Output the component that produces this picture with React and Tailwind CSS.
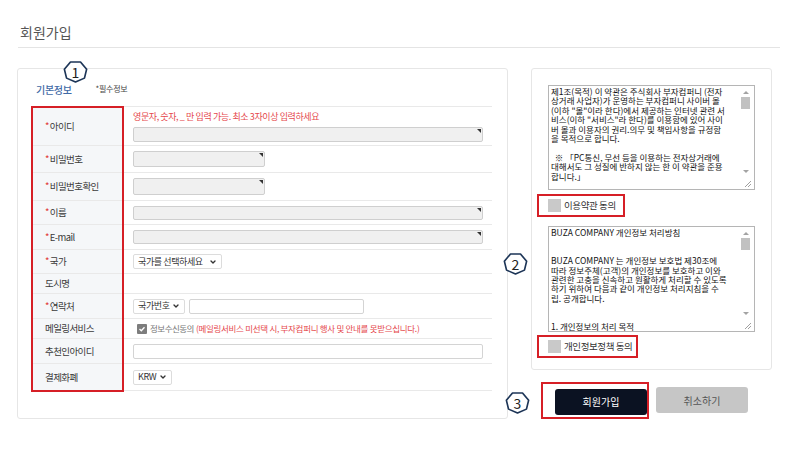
import { ChevronDown } from 'lucide-react'

// ── Numbered heptagon marker ─────────────────────────────────────
function Marker({ n, className }) {
  return (
    <div className={`absolute w-[25px] h-[23px] flex items-center justify-center ${className}`}>
      <svg width="25" height="23" viewBox="0 0 24 24" className="absolute inset-0" preserveAspectRatio="none">
        <polygon
          points="12,23 3.4,18.9 1.3,9.6 7.2,2.1 16.8,2.1 22.7,9.6 20.6,18.9"
          fill="white"
          stroke="#1d3557"
          strokeWidth="1.6"
          strokeLinejoin="round"
        />
      </svg>
      <span className="relative text-[14px] leading-none text-[#222] pt-[1px]">{n}</span>
    </div>
  )
}

// ── Form pieces ──────────────────────────────────────────────────
function Input({ w, h = 'h-[15px]', filled = true }) {
  return (
    <div className={`relative rounded-[2px] border ${w} ${h} ${filled ? 'bg-[#f0f0f0] border-[#cfcfcf]' : 'bg-white border-[#d4d4d4]'}`}>
      {filled && (
        <span className="absolute top-[1px] right-[1px] w-0 h-0 border-l-[4px] border-l-transparent border-t-[4px] border-t-[#333]" />
      )}
    </div>
  )
}

function Select({ text, w }) {
  return (
    <div className={`h-[15px] ${w} bg-white border border-[#dcdcdc] rounded-[2px] flex items-center justify-between pl-[4px] pr-[4px] text-[9px] tracking-[-0.4px] text-[#333]`}>
      <span>{text}</span>
      <ChevronDown size={8} strokeWidth={4} className="text-[#333]" />
    </div>
  )
}

function Row({ h, label, req, children }) {
  return (
    <div className={`flex border-b border-[#e9e9e9] ${h}`}>
      <div className="w-[89px] bg-[#f5f7f9] flex items-center pl-[12px] text-[9.5px] tracking-[-0.6px] text-[#3a3a3a]">
        {req && <span className="text-[#e0342f] mr-[1px]">*</span>}
        {label}
      </div>
      <div className="flex-1 pl-[11px] flex items-center">{children}</div>
    </div>
  )
}

// ── Fake textarea with scrollbar ────────────────────────────────
function TextBox({ lines, h }) {
  return (
    <div className={`ml-[16px] w-[207px] ${h} border border-[#b5b5b5] flex bg-white`}>
      <div className="flex-1 overflow-hidden pl-[2px] pt-[1px] text-[8.5px] leading-[9.4px] text-[#111] whitespace-pre">
        {lines.map((l, i) => (
          <div key={i} className="h-[9.4px]">{l}</div>
        ))}
      </div>
      <div className="w-[17px] flex flex-col items-center">
        <span className="mt-[5px] w-0 h-0 border-l-[3px] border-r-[3px] border-b-[3px] border-l-transparent border-r-transparent border-b-[#a3a3a3]" />
        <div className="mt-[3px] w-[9px] h-[12px] bg-[#c1c1c1]" />
        <div className="flex-1" />
        <span className="mb-[4px] w-0 h-0 border-l-[3px] border-r-[3px] border-t-[3px] border-l-transparent border-r-transparent border-t-[#a3a3a3]" />
        <svg width="17" height="12" viewBox="0 0 17 12">
          <path d="M14 4 L8 10 M14 7 L11 10" stroke="#a0a0a0" strokeWidth="1" />
        </svg>
      </div>
    </div>
  )
}

function Agree({ label, w }) {
  return (
    <div className={`ml-[5px] h-[23px] ${w} border-2 border-[#d61f26] flex items-center pl-[9px] gap-[3px]`}>
      <span className="w-[13px] h-[13px] bg-[#c9c9c9]" />
      <span className="text-[9.5px] tracking-[-0.4px] text-[#333]">{label}</span>
    </div>
  )
}

const terms = [
  '제1조(목적) 이 약관은 주식회사 부자컴퍼니 (전자',
  '상거래 사업자)가 운영하는 부자컴퍼니 사이버 몰',
  '(이하 "몰"이라 한다)에서 제공하는 인터넷 관련 서',
  '비스(이하 "서비스"라 한다)를 이용함에 있어 사이',
  '버 몰과 이용자의 권리.의무 및 책임사항을 규정함',
  '을 목적으로 합니다.',
  '',
  '  ※ 「PC통신, 무선 등을 이용하는 전자상거래에',
  '대해서도 그 성질에 반하지 않는 한 이 약관을 준용',
  '합니다.」',
]

const privacy = [
  'BUZA COMPANY 개인정보 처리방침',
  '',
  '',
  'BUZA COMPANY 는 개인정보 보호법 제30조에',
  '따라 정보주체(고객)의 개인정보를 보호하고 이와',
  '관련한 고충을 신속하고 원활하게 처리할 수 있도록',
  '하기 위하여 다음과 같이 개인정보 처리지침을 수',
  '립. 공개합니다.',
  '',
  '',
  '1. 개인정보의 처리 목적',
]

export default function App() {
  return (
    <div className="relative w-[800px] h-[450px] overflow-hidden bg-white font-['Noto_Sans_CJK_KR',sans-serif]">
      {/* Title */}
      <div className="pt-[22px] px-[18px]">
        <h1 className="pl-[2px] text-[14px] leading-[20px] text-[#555]">회원가입</h1>
        <div className="mt-[5px] h-px w-[762px] bg-[#e4e4e4]" />
      </div>

      <div className="mt-[20px] pl-[17px] flex items-start">
        {/* Left: basic info */}
        <div className="w-[491px] h-[351px] border border-[#e6e6e6] rounded-[3px]">
          <div className="h-[37px] pt-[14px] pl-[18px] flex items-start">
            <span className="text-[10px] leading-[14px] tracking-[-0.3px] text-[#3f6aa6] font-medium">기본정보</span>
            <span className="ml-[24px] text-[8px] leading-[12px] tracking-[-0.3px] text-[#444]">*필수정보</span>
          </div>

          <div className="relative ml-[15px] w-[459px] border-t border-[#e9e9e9]">
            <div className="absolute -left-[2px] -top-[1px] w-[93px] h-[286px] border-2 border-[#d61f26] pointer-events-none" />

            <Row h="h-[39px]" label="아이디" req>
              <div className="flex flex-col self-start pt-[4px]">
                <span className="text-[9px] leading-[12px] tracking-[-0.4px] text-[#e5484d]">
                  영문자, 숫자, _ 만 입력 가능. 최소 3자이상 입력하세요
                </span>
                <div className="mt-[4px]"><Input w="w-[350px]" /></div>
              </div>
            </Row>
            <Row h="h-[27px]" label="비밀번호" req><Input w="w-[132px]" h="h-[16px]" /></Row>
            <Row h="h-[28px]" label="비밀번호확인" req><Input w="w-[132px]" h="h-[17px]" /></Row>
            <Row h="h-[24px]" label="이름" req><Input w="w-[350px]" h="h-[14px]" /></Row>
            <Row h="h-[25px]" label="E-mail" req><Input w="w-[350px]" h="h-[14px]" /></Row>
            <Row h="h-[24px]" label="국가" req><Select text="국가를 선택하세요" w="w-[89px]" /></Row>
            <Row h="h-[20px]" label="도시명" />
            <Row h="h-[25px]" label="연락처" req>
              <Select text="국가번호" w="w-[52px]" />
              <div className="ml-[4px]"><Input w="w-[175px]" filled={false} /></div>
            </Row>
            <Row h="h-[20px]" label="메일링서비스">
              <span className="ml-[4px] w-[10px] h-[10px] bg-[#7d7d7d] rounded-[1px] flex items-center justify-center">
                <svg width="8" height="8" viewBox="0 0 8 8">
                  <path d="M1.5 4 L3.3 5.8 L6.5 2.2" stroke="white" strokeWidth="1.3" fill="none" />
                </svg>
              </span>
              <span className="ml-[3px] text-[8.5px] tracking-[-0.5px] text-[#777]">정보수신동의</span>
              <span className="ml-[2px] text-[8.5px] tracking-[-0.3px] text-[#e5484d]">
                (메일링서비스 미선택 시, 부자컴퍼니 행사 및 안내를 못받으십니다.)
              </span>
            </Row>
            <Row h="h-[25px]" label="추천인아이디"><Input w="w-[350px]" filled={false} /></Row>
            <Row h="h-[27px]" label="결제화폐"><Select text="KRW" w="w-[39px]" /></Row>
          </div>
        </div>

        {/* Right: agreements + buttons */}
        <div className="ml-[23px] w-[241px]">
          <div className="h-[302px] border border-[#e6e6e6] rounded-[3px] pt-[16px]">
            <TextBox lines={terms} h="h-[105px]" />
            <div className="mt-[4px]"><Agree label="이용약관 동의" w="w-[88px]" /></div>
            <div className="mt-[9px]"><TextBox lines={privacy} h="h-[106px]" /></div>
            <div className="mt-[3px]"><Agree label="개인정보정책 동의" w="w-[101px]" /></div>
          </div>

          <div className="mt-[17px] pl-[24px] flex gap-[9px]">
            <div className="relative">
              <div className="absolute -left-[14px] -top-[5px] w-[108px] h-[37px] border-2 border-[#d61f26]" />
              <button className="relative w-[92px] h-[26px] rounded-[3px] bg-[#0b1222] text-white text-[10px]">회원가입</button>
            </div>
            <button className="w-[92px] h-[26px] rounded-[3px] bg-[#c6c6c6] text-[#555] text-[10px]">취소하기</button>
          </div>
        </div>
      </div>

      <Marker n="1" className="left-[63px] top-[60px]" />
      <Marker n="2" className="left-[503px] top-[252px]" />
      <Marker n="3" className="left-[505px] top-[391px]" />
    </div>
  )
}
